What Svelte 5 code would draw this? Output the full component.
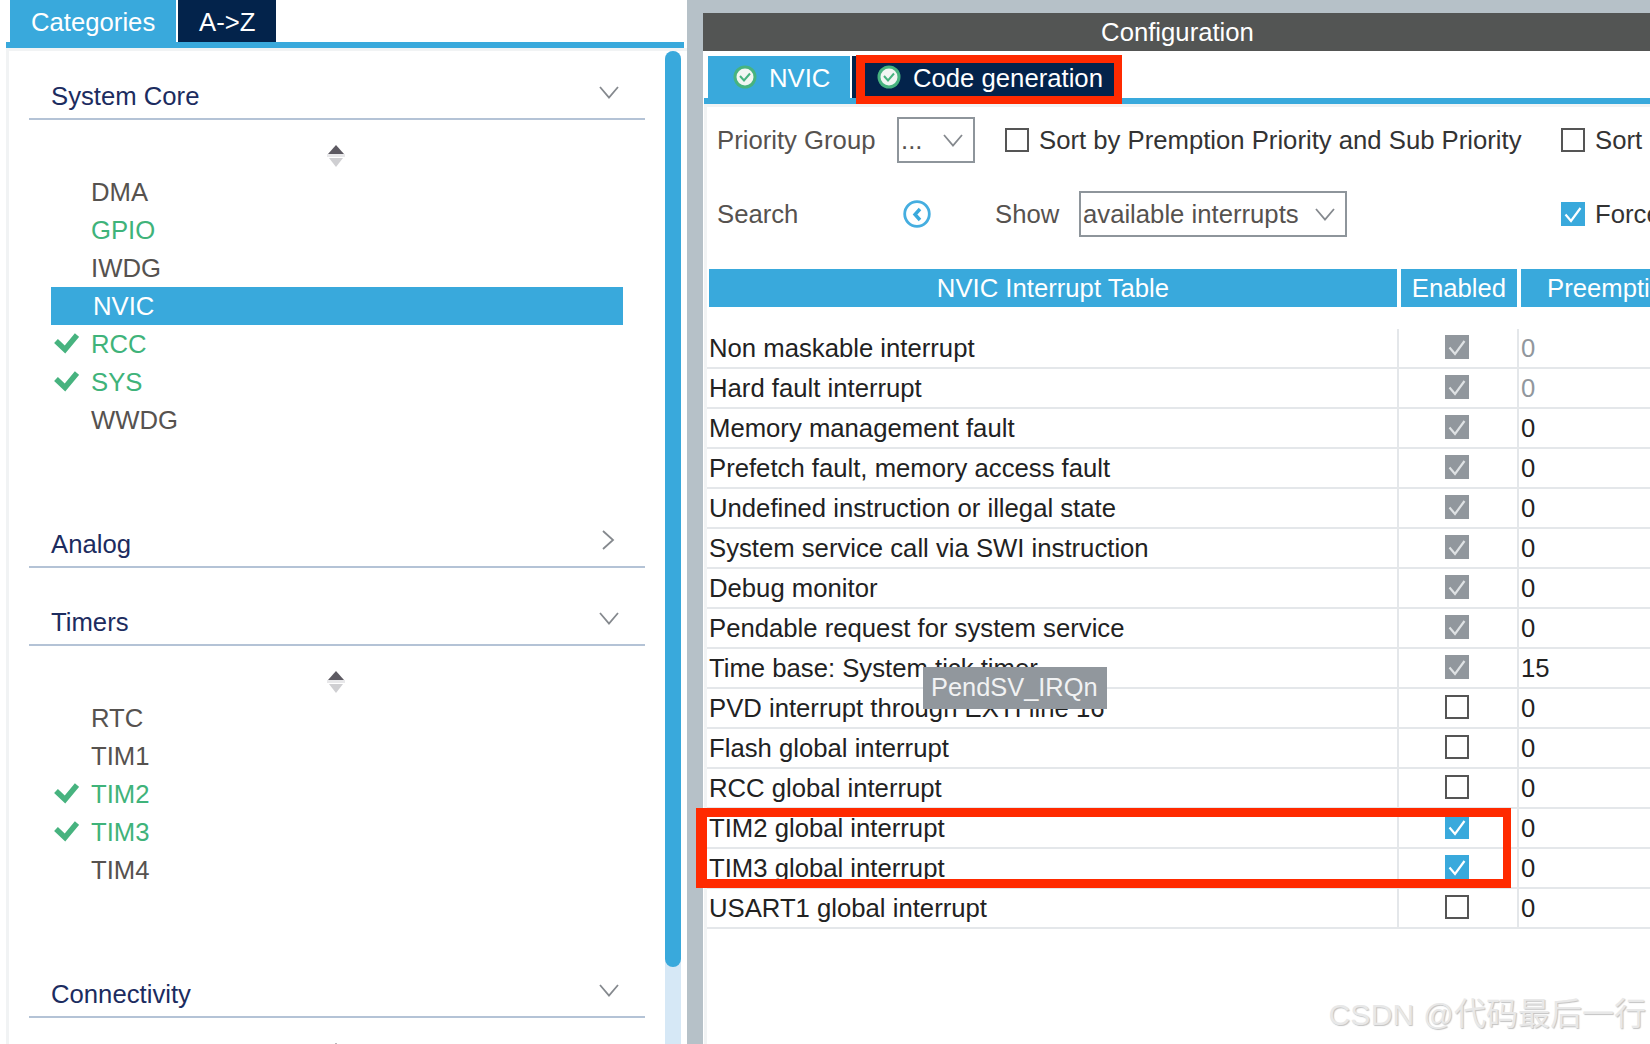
<script>
  const sections = [
    {
      name: "System Core",
      open: true,
      items: [
        { n: "DMA" },
        { n: "GPIO", green: true },
        { n: "IWDG" },
        { n: "NVIC", active: true },
        { n: "RCC", green: true, check: true },
        { n: "SYS", green: true, check: true },
        { n: "WWDG" },
      ],
    },
    { name: "Analog", open: false, items: [] },
    {
      name: "Timers",
      open: true,
      items: [
        { n: "RTC" },
        { n: "TIM1" },
        { n: "TIM2", green: true, check: true },
        { n: "TIM3", green: true, check: true },
        { n: "TIM4" },
      ],
    },
    { name: "Connectivity", open: true, items: [] },
  ];

  // state: d = disabled checked, on = checked, off = empty
  const rows = [
    ["Non maskable interrupt", "d", "0", true],
    ["Hard fault interrupt", "d", "0", true],
    ["Memory management fault", "d", "0"],
    ["Prefetch fault, memory access fault", "d", "0"],
    ["Undefined instruction or illegal state", "d", "0"],
    ["System service call via SWI instruction", "d", "0"],
    ["Debug monitor", "d", "0"],
    ["Pendable request for system service", "d", "0"],
    ["Time base: System tick timer", "d", "15"],
    ["PVD interrupt through EXTI line 16", "off", "0"],
    ["Flash global interrupt", "off", "0"],
    ["RCC global interrupt", "off", "0"],
    ["TIM2 global interrupt", "on", "0"],
    ["TIM3 global interrupt", "on", "0"],
    ["USART1 global interrupt", "off", "0"],
  ];
</script>

{#snippet chevron(cls)}
  <svg class={cls} width="20" height="13" viewBox="0 0 20 13"><path d="M1 1 L10 11.5 L19 1" fill="none" stroke="#85898e" stroke-width="1.8" /></svg>
{/snippet}

{#snippet sortIcon()}
  <svg class="sort" width="18" height="22" viewBox="0 0 18 22">
    <path d="M9 0 L17 9 H1 Z" fill="#5d5a62" />
    <rect x="0" y="9" width="18" height="3" fill="#e8e8ea" />
    <path d="M2 13 H16 L9 22 Z" fill="#cfcfd2" />
  </svg>
{/snippet}

{#snippet tabCheck()}
  <svg class="tabcheck" width="24" height="24" viewBox="0 0 24 24">
    <circle cx="12" cy="12" r="11.5" fill="#47b37f" />
    <circle cx="12" cy="12" r="8.5" fill="#f2f6f3" />
    <path d="M7 11 L11 15.5 L17 8.5" fill="none" stroke="#47b37f" stroke-width="2" />
  </svg>
{/snippet}

{#snippet box(state)}
  <span class="box {state}">
    {#if state !== "off"}
      <svg width="24" height="24" viewBox="0 0 24 24"><path d="M4.5 12.5 L10 19 L19.5 6" fill="none" stroke={state === "d" ? "#dfe2e4" : "#fff"} stroke-width="2.2" /></svg>
    {/if}
  </span>
{/snippet}

<div class="page">
  <aside class="left">
    <div class="tabs">
      <div class="tab cat">Categories</div>
      <div class="tab az">A-&gt;Z</div>
    </div>
    <div class="rule"></div>
    <div class="panel">
      <div class="list">
        {#each sections as s}
          <section class="sec" class:closed={!s.open}>
            <div class="sec-head">
              <span>{s.name}</span>
              {#if s.open}
                {@render chevron("chev")}
              {:else}
                <svg class="chev" width="20" height="20" viewBox="0 0 20 20"><path d="M5 1 L15 10 L5 19" fill="none" stroke="#85898e" stroke-width="1.8" /></svg>
              {/if}
            </div>
            {#if s.open}
              <div class="sort-row">{@render sortIcon()}</div>
            {/if}
            {#each s.items as it}
              <div class="item" class:green={it.green} class:active={it.active}>
                {#if it.check}
                  <svg class="tick" width="26" height="24" viewBox="0 0 26 24"><path d="M3 10 L12 18.5 L24 4" fill="none" stroke="#47b37f" stroke-width="5.5" /></svg>
                {/if}
                <span>{it.n}</span>
              </div>
            {/each}
          </section>
        {/each}
      </div>
      <div class="scroll"><div class="thumb"></div></div>
    </div>
  </aside>

  <div class="gutter"></div>

  <main class="right">
    <header class="title">Configuration</header>
    <div class="rtabs">
      <div class="rtab nvic">{@render tabCheck()}<span>NVIC</span></div>
      <div class="strip"></div>
      <div class="rtab gen">{@render tabCheck()}<span>Code generation</span></div>
    </div>
    <div class="rule2"></div>
    <div class="content">
      <div class="ctl one">
        <span class="lbl pg">Priority Group</span>
        <div class="select small"><span>...</span>{@render chevron("selchev")}</div>
        {@render box("off")}
        <span class="txt long">Sort by Premption Priority and Sub Priority</span>
        {@render box("off")}
        <span class="txt">Sort</span>
      </div>
      <div class="ctl two">
        <span class="lbl srch">Search</span>
        <svg class="back" width="28" height="28" viewBox="0 0 28 28">
          <circle cx="14" cy="14" r="12.3" fill="none" stroke="#45aee0" stroke-width="2.8" />
          <path d="M17 9 L12 14.5 L17 20" fill="none" stroke="#39a9dc" stroke-width="3.4" />
        </svg>
        <span class="lbl show">Show</span>
        <div class="select wide"><span>available interrupts</span>{@render chevron("selchev")}</div>
        {@render box("on")}
        <span class="txt">Force DMA channels</span>
      </div>

      <div class="thead">
        <div class="th name">NVIC Interrupt Table</div>
        <div class="th en">Enabled</div>
        <div class="th pre">Preemption Priority</div>
      </div>

      <div class="tbody">
        {#each rows as r}
          <div class="row">
            <div class="c name">{r[0]}</div>
            <div class="c en">{@render box(r[1])}</div>
            <div class="c pre" class:dim={r[3]}>{r[2]}</div>
          </div>
        {/each}
      </div>

      <div class="tip">PendSV_IRQn</div>
      <div class="redbox"></div>
    </div>
    <div class="mark"><span class="lat">CSDN @</span>代码最后一行</div>
  </main>
</div>

<style>
  :global(body) {
    margin: 0;
    background: #fff;
  }
  .page {
    width: 1650px;
    height: 1044px;
    overflow: hidden;
    display: flex;
    font-family: "Liberation Sans", Arial, sans-serif;
    font-size: 25.7px;
    color: #333;
    position: relative;
  }

  /* left side */
  .left {
    width: 687px;
    flex: none;
    display: flex;
    flex-direction: column;
    padding-left: 6px;
    box-sizing: border-box;
    background: #fff;
  }
  .tabs {
    display: flex;
    height: 42px;
    padding-left: 4px;
    gap: 2px;
  }
  .tab {
    color: #fff;
    line-height: 44px;
    box-sizing: border-box;
    overflow: hidden;
  }
  .cat {
    width: 166px;
    background: #39a9dc;
    padding-left: 21px;
  }
  .az {
    width: 98px;
    background: #03234b;
    padding-left: 21px;
  }
  .rule {
    height: 6px;
    background: #39a9dc;
    margin-right: 3px;
  }
  .panel {
    flex: 1;
    display: flex;
    background: #fff;
    border-top: 3px solid #f1f3f4;
    border-left: 3px solid #f1f3f4;
    min-height: 0;
  }
  .list {
    width: 656px;
    flex: none;
    padding: 0 20px;
    box-sizing: border-box;
    overflow: hidden;
  }
  .sec {
    padding-top: 24px;
  }
  .sec:nth-child(1) {
    min-height: 448px;
  }
  .sec:nth-child(2) {
    padding-top: 0;
    height: 78px;
  }
  .sec:nth-child(3) {
    padding-top: 0;
    min-height: 348px;
  }
  .sec-head {
    height: 43px;
    border-bottom: 2px solid #b4c3d6;
    display: flex;
    justify-content: space-between;
    align-items: flex-start;
    color: #1c2c60;
    padding: 0 6px 0 22px;
    line-height: 42px;
  }
  .chev {
    margin: 11px 20px 0 0;
  }
  .closed .chev {
    margin-top: 7px;
    margin-right: 21px;
  }
  .sort-row {
    height: 28px;
    padding-top: 25px;
    display: flex;
    justify-content: center;
  }
  .sort {
    margin-right: 2px;
  }
  .item {
    height: 38px;
    line-height: 38px;
    padding-left: 62px;
    position: relative;
    color: #56524f;
  }
  .item.green {
    color: #3fb37a;
  }
  .item.active {
    background: #39a9dc;
    color: #fff;
    margin: 0 22px;
    padding-left: 42px;
    width: 572px;
    box-sizing: border-box;
  }
  .tick {
    position: absolute;
    left: 24px;
    top: 6px;
  }
  .scroll {
    width: 16px;
    flex: none;
    background: #d6e8f6;
    border-radius: 8px 8px 0 0;
  }
  .thumb {
    height: 916px;
    background: #39a9dc;
    border-radius: 8px;
  }
  .gutter {
    width: 16px;
    flex: none;
    background: #b6c1c8;
  }

  /* right side */
  .right {
    flex: 1;
    min-width: 0;
    display: flex;
    flex-direction: column;
    background: #fff;
    border-top: 13px solid #b6c1c8;
    position: relative;
  }
  .title {
    height: 38px;
    line-height: 39px;
    background: #535554;
    color: #fff;
    text-align: center;
    padding-left: 2px;
  }
  .rtabs {
    display: flex;
    height: 42px;
    margin-top: 5px;
    padding-left: 5px;
    gap: 2px;
  }
  .rtab {
    color: #fff;
    display: flex;
    align-items: center;
    box-sizing: border-box;
    flex: none;
  }
  .rtab span {
    margin-top: 2px;
  }
  .nvic {
    width: 142px;
    background: #39a9dc;
    padding-left: 25px;
    gap: 12px;
  }
  .strip {
    width: 6px;
    flex: none;
    background: #03234b;
  }
  .gen {
    width: 266px;
    height: 49px;
    margin: -1px 0 0 -4px;
    background: #03234b;
    border: 8px solid #ff2a00;
    border-left-width: 9px;
    padding: 0 0 5px 12px;
    gap: 12px;
    position: relative;
    z-index: 2;
  }
  .tabcheck {
    flex: none;
  }
  .rule2 {
    height: 6px;
    margin-left: 1px;
    background: #39a9dc;
  }
  .content {
    flex: 1;
    margin-left: 1px;
    border-top: 3px solid #f1f3f4;
    border-left: 3px solid #f1f3f4;
    position: relative;
    min-height: 0;
  }
  .ctl {
    display: flex;
    align-items: center;
    white-space: nowrap;
    overflow: hidden;
    height: 46px;
    color: #333;
  }
  .ctl > :global(*) {
    flex: none;
  }
  .one {
    margin-top: 10px;
  }
  .two {
    margin-top: 28px;
  }
  .lbl {
    color: #56524f;
  }
  .pg {
    margin-left: 10px;
    width: 180px;
  }
  .srch {
    margin-left: 10px;
    width: 186px;
  }
  .show {
    margin-left: 64px;
    width: 84px;
  }
  .select {
    height: 46px;
    border: 2px solid #8e959b;
    box-sizing: border-box;
    display: flex;
    align-items: center;
    justify-content: space-between;
    padding: 0 10px 0 2px;
    color: #56524f;
  }
  .small {
    width: 78px;
    margin-right: 30px;
  }
  .wide {
    width: 268px;
    margin-right: 214px;
  }
  .box {
    width: 24px;
    height: 24px;
    flex: none;
    display: block;
    box-sizing: border-box;
  }
  .box svg {
    display: block;
  }
  .box.off {
    border: 2px solid #555;
    background: #fff;
  }
  .box.on {
    background: #39a9dc;
  }
  .box.d {
    background: #91979d;
  }
  .txt {
    margin-left: 10px;
  }
  .txt.long {
    width: 522px;
  }
  .thead {
    display: flex;
    height: 38px;
    margin-top: 32px;
    margin-left: 2px;
    gap: 4px;
    white-space: nowrap;
  }
  .th {
    background: #39a9dc;
    color: #fff;
    line-height: 38px;
    text-align: center;
    flex: none;
    box-sizing: border-box;
  }
  .th.name {
    width: 688px;
  }
  .th.en {
    width: 116px;
  }
  .th.pre {
    width: 300px;
    text-align: left;
    padding-left: 26px;
  }
  .tbody {
    margin-top: 22px;
  }
  .row {
    height: 40px;
    display: flex;
    border-bottom: 2px solid #e4e7ea;
    box-sizing: border-box;
    white-space: nowrap;
    color: #222;
  }
  .c {
    line-height: 38px;
    flex: none;
    box-sizing: border-box;
  }
  .c.name {
    width: 690px;
    padding-left: 2px;
  }
  .c.en {
    width: 122px;
    border-left: 2px solid #e4e7ea;
    border-right: 2px solid #e4e7ea;
    padding: 6px 0 0 46px;
  }
  .c.pre {
    padding-left: 2px;
  }
  .c.pre.dim {
    color: #91979d;
  }
  .tip {
    position: absolute;
    left: 216px;
    top: 560px;
    width: 184px;
    height: 42px;
    line-height: 41px;
    background: #91979d;
    color: #f1f2f3;
    box-sizing: border-box;
    padding-left: 8px;
    font-size: 25.4px;
    white-space: nowrap;
  }
  .redbox {
    position: absolute;
    left: -11px;
    top: 701px;
    width: 815px;
    height: 80px;
    border: 9px solid #ff2a00;
    border-width: 9px 8px 9px 11px;
    box-sizing: border-box;
  }
  .mark {
    position: absolute;
    right: 4px;
    bottom: 10px;
    font-family: "Liberation Sans", "Noto Sans CJK SC", sans-serif;
    font-size: 32px;
    color: #e8e8e8;
    text-shadow: 1px 1px 1px #c2c2c2;
    white-space: nowrap;
  }
  .lat {
    font-size: 30px;
    letter-spacing: 0.3px;
  }
</style>
